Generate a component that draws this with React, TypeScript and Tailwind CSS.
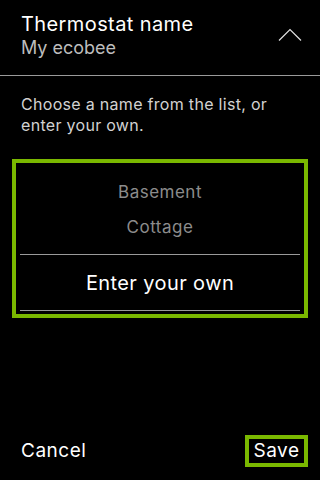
import { ChevronUp } from "lucide-react";

const options = ["Basement", "Cottage"];

export default function App() {
  return (
    <div className="flex h-[480px] w-[320px] flex-col bg-black font-['Inter',sans-serif] text-white">
      {/* Header */}
      <div className="flex h-[76px] items-start justify-between border-b border-[#9a9a9a] pl-[21px] pr-[18px] pt-[12px]">
        <div className="flex flex-col">
          <span className="text-[20px] leading-[24px] tracking-[0.4px]">Thermostat name</span>
          <span className="text-[18px] leading-[24px] text-[#bdbdbd]">My ecobee</span>
        </div>
        <svg width="24" height="14" viewBox="0 0 24 14" className="mt-[16px]" fill="none">
          <path d="M1 12.5 L12 1.5 L23 12.5" stroke="#e0e0e0" strokeWidth="1.2" />
        </svg>
      </div>

      {/* Body */}
      <p className="px-[21px] pt-[18px] text-[16px] leading-[21px] tracking-[0.3px] text-[#d2d2d2]">
        Choose a name from the list, or enter your own.
      </p>

      <div className="mx-[12px] mt-[23px] flex h-[159px] flex-col border-4 border-[#7ab800] px-1 pt-[12px]">
        {options.map((o) => (
          <div key={o} className="flex h-[35px] items-center justify-center text-[17px] tracking-[0.5px] text-[#8c8c8c]">
            {o}
          </div>
        ))}
        <div className="mt-[9px] flex h-[57px] items-center justify-center border-y border-[#9a9a9a] text-[20px] tracking-[0.4px]">
          Enter your own
        </div>
      </div>

      {/* Footer */}
      <div className="mt-auto flex items-center justify-between pb-[13px] pl-[21px] pr-[12px]">
        <span className="text-[19px] tracking-[0.5px]">Cancel</span>
        <span className="flex h-[32px] w-[63px] items-center justify-center border-4 border-[#7ab800] text-[19px] tracking-[0.5px]">
          Save
        </span>
      </div>
    </div>
  );
}
